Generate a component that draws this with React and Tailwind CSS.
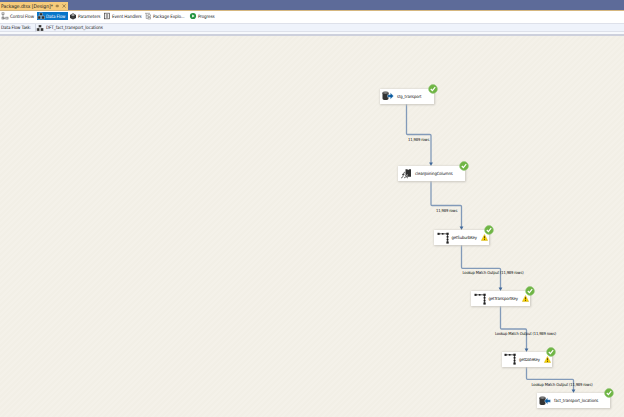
import React from "react";

const nodes = [
  { name: "stg_transport", icon: "source", box: "left-[379.5px] top-[88.5px] w-[54px]", text: "tracking-[-0.1px]" },
  { name: "cleanJoiningColumns", icon: "derived", box: "left-[397.5px] top-[166px] w-[67px]", text: "tracking-[-0.14px]" },
  { name: "getSuburbKey", icon: "lookup", warn: true, box: "left-[434px] top-[230px] w-[55px]", text: "tracking-[-0.16px]" },
  { name: "getTransportKey", icon: "lookup", warn: true, box: "left-[471px] top-[291px] w-[59px]", text: "tracking-[-0.13px]" },
  { name: "getDateKey", icon: "lookup", warn: true, box: "left-[501.5px] top-[351.5px] w-[50px]", text: "tracking-[-0.18px]" },
  { name: "fact_transport_locations", icon: "destination", box: "left-[536.5px] top-[393px] w-[73px]", text: "tracking-[-0.09px]" },
];

const edges = [
  { x: 406.5, y: 104, mid: 134.5, x2: 431, y2: 166 },
  { x: 431, y: 181, mid: 205.5, x2: 461.5, y2: 230 },
  { x: 461.5, y: 245, mid: 268.3, x2: 500.5, y2: 291 },
  { x: 500.5, y: 306, mid: 329, x2: 526.5, y2: 352 },
  { x: 526.5, y: 367, mid: 379.3, x2: 573.5, y2: 393 },
];

const labels = [
  { text: "11,989 rows", pos: "left-[408px] top-[136px] tracking-[-0.13px]" },
  { text: "11,989 rows", pos: "left-[436px] top-[207px] tracking-[-0.13px]" },
  { text: "Lookup Match Output (11,989 rows)", pos: "left-[462.5px] top-[269px] tracking-[-0.16px]" },
  { text: "Lookup Match Output (11,989 rows)", pos: "left-[495px] top-[330px] tracking-[-0.16px]" },
  { text: "Lookup Match Output (11,989 rows)", pos: "left-[531.5px] top-[380.5px] tracking-[-0.16px]" },
];

function NodeIcon({ type }) {
  return (
    <svg className="h-[12px] w-[14px] shrink-0" viewBox="0 0 14 12">
      {(type === "source" || type === "destination") && (
        <>
          <path d="M.5 3v5.5c0 2 6 2 6 0V3z" fill="#333333" />
          <ellipse cx="3.5" cy="3" rx="3" ry="1.1" fill="#999999" stroke="#333333" strokeWidth=".8" />
          <path
            d={type === "source" ? "M5.5 4.8h2.8V2.7L11.6 6 8.3 9.3V7.2H5.5z" : "M11.5 4.8H8.7V2.7L5.4 6l3.3 3.3V7.2h2.8z"}
            fill="#08599f" stroke="#ffffff" strokeWidth=".35"
          />
        </>
      )}
      {type === "derived" && (
        <>
          <path d="M5.5 1.2h2.2v.8h1V1.2H11v7.6H5.5z" fill="#303030" />
          <path d="M5 4.2c-1.8-.7-1.5 6.5-3.8 5.6M2 6.4h2.4M4.8 6.9c1.8 0 1.4 3.3 3 3M7.8 6.9C6.6 6.7 6 10 4.2 9.8" fill="none" stroke="#ffffff" strokeWidth="1.2" />
          <path d="M5 4.2c-1.8-.7-1.5 6.5-3.8 5.6M2 6.4h2.4M4.8 6.9c1.8 0 1.4 3.3 3 3M7.8 6.9C6.6 6.7 6 10 4.2 9.8" fill="none" stroke="#333333" strokeWidth=".8" />
        </>
      )}
      {type === "lookup" && (
        <>
          <path d="M1.5 1.8h9v9" fill="none" stroke="#333333" strokeWidth=".8" />
          <g fill="#222222">
            <rect x=".5" y=".8" width="2.1" height="2.1" />
            <rect x="4.9" y="1" width="1.6" height="1.6" />
            <rect x="9.4" y=".7" width="2.3" height="2.2" />
            <rect x="9.6" y="3.9" width="1.9" height="1.7" />
            <rect x="9.6" y="6.7" width="1.9" height="1.7" />
            <rect x="9.4" y="9.4" width="2.3" height="2.2" />
          </g>
        </>
      )}
    </svg>
  );
}

function Node({ node }) {
  return (
    <div className={`absolute flex h-[15px] items-center bg-white pl-[2.5px] shadow-[0_0.5px_2px_0.5px_#cbc8c0] ${node.box}`}>
      <NodeIcon type={node.icon} />
      <span className={`ml-[1px] text-[4.3px] text-[#111111] ${node.text}`}>{node.name}</span>
      {node.warn && (
        <svg className="absolute right-[1px] top-[4px] h-[7px] w-[7px]" viewBox="0 0 7 7">
          <path d="M3.5.4 6.7 6.5H.3z" fill="#f8d000" stroke="#c9ab12" strokeWidth=".4" strokeLinejoin="round" />
          <path d="M3.5 2.2v2.2M3.5 5v.9" stroke="#332b00" strokeWidth=".8" />
        </svg>
      )}
      <svg className="absolute -right-[4.5px] -top-[5px] h-[10px] w-[10px]" viewBox="0 0 10 10">
        <circle cx="5" cy="5" r="4.4" fill="#6fb544" stroke="#94c77a" strokeWidth=".6" />
        <path d="m2.8 5 1.6 1.7L7.2 3.2" fill="none" stroke="#ffffff" strokeWidth="1.2" />
      </svg>
    </div>
  );
}

function ToolIcon({ type }) {
  return (
    <svg className="h-[8px] w-[8px] shrink-0" viewBox="0 0 8 8">
      {type === "control" && (
        <g fill="none" stroke="#777777" strokeWidth=".7">
          <rect x="1" y=".8" width="2" height="1.6" /><path d="M2 2.4v4h2" />
          <rect x="1" y="5.2" width="2" height="1.8" /><rect x="4.8" y="5.2" width="2.2" height="1.8" />
        </g>
      )}
      {type === "data" && (
        <g fill="#292929" stroke="#e2e2e2" strokeWidth=".4">
          <path d="M2.6.9h2.8v2.7H2.6zM.8 4h2.8v3.1H.8zM4.6 4h2.8v3.1H4.6z" />
        </g>
      )}
      {type === "parameters" && (
        <>
          <path d="M1 3 4 1.3 7 3v3L4 7.5 1 6z" fill="#333333" />
          <path d="m1.8 3.1 2.2-1 2.2 1L4 4.1z" fill="#bcbcbc" /><path d="M4 4.3v2.5" stroke="#888888" strokeWidth=".4" />
        </>
      )}
      {type === "events" && (
        <g fill="none" stroke="#444444" strokeWidth=".7"><rect x="1.4" y="1.2" width="5.2" height="5.6" /><path d="M2.8 2.8h2.4M2.8 4h2.4M2.8 5.2h2.4" /></g>
      )}
      {type === "explorer" && (
        <g fill="none" stroke="#777777" strokeWidth=".6"><path d="M1 1.3h5M2.2 1.5v5h1.5M2.2 3.8h1.5" /><rect x="4" y="2.8" width="2.5" height="1.5" /><rect x="4" y="5.5" width="2.5" height="1.5" /></g>
      )}
      {type === "progress" && <><circle cx="4" cy="4" r="3.1" fill="#259542" /><path d="m3.2 2.5 2.4 1.5-2.4 1.5z" fill="#ffffff" /></>}
    </svg>
  );
}

function Tab({ type, children, className }) {
  return (
    <div className={`flex h-[8px] shrink-0 items-center whitespace-nowrap ${className}`}>
      <ToolIcon type={type} /><span className="ml-px">{children}</span>
    </div>
  );
}

export default function App() {
  return (
    <main className="flex h-[417px] w-[624px] flex-col overflow-hidden bg-[#f3f0e7] font-['DejaVu_Sans_Condensed','DejaVu_Sans',sans-serif] text-[4.6px] leading-[7px] tracking-[-0.14px] text-[#222222]">
      <header className="flex h-[11px] shrink-0 items-end border-b border-[#d6b77f] bg-[#5d6b99]">
        <div className="flex h-[8px] w-[68px] items-center bg-[#f6cb7b] pl-px text-[5px] tracking-[-0.02px]">
          <span className="w-[54px] whitespace-nowrap">Package.dtsx [Design]*</span>
          <svg className="h-[6px] w-[12px]" viewBox="0 0 12 6"><path d="M.5 3h1.2M1.8 1.8v2.4M1.8 2.3h1.5v1.4H1.8M7.6 1.4l3 3.2M10.6 1.4l-3 3.2" fill="none" stroke="#806638" strokeWidth=".7" /></svg>
        </div>
      </header>
      <nav className="flex h-[12px] shrink-0 items-start bg-white pl-px pt-px">
        <Tab type="control" className="w-[36px]">Control Flow</Tab>
        <Tab type="data" className="w-[31px] bg-[#0875c9] text-white">Data Flow</Tab>
        <Tab type="parameters" className="ml-px w-[34px]">Parameters</Tab>
        <Tab type="events" className="w-[41px]">Event Handlers</Tab>
        <Tab type="explorer" className="w-[45px]">Package Explo...</Tab>
        <Tab type="progress" className="w-[30px]">Progress</Tab>
      </nav>
      <section className="flex h-[9px] shrink-0 items-center border-y border-[#dee1ea] bg-[#eff3fb] pl-px">
        <span className="w-[34px] whitespace-nowrap">Data Flow Task:</span>
        <div className="flex h-[8px] grow items-center border-l border-[#d0d5e1]">
          <ToolIcon type="data" />
          <span className="ml-[2px] tracking-[-0.1px]">DFT_fact_transport_locations</span>
        </div>
      </section>
      <div className="h-[4px] shrink-0 border-b-2 border-[#cdd0dc] bg-[#f7f9fc]" />
      <section className="min-h-0 grow bg-[repeating-linear-gradient(135deg,#f4f1e9_0px,#f4f1e9_2px,#f2efe6_2px,#f2efe6_4px)]">
        <svg className="absolute left-0 top-0 h-[417px] w-[624px]" viewBox="0 0 624 417">
          {edges.map((e) => (
            <g key={e.x}>
              <path d={`M${e.x} ${e.y}V${e.mid - 1}q0 1 1 1H${e.x2 - 1}q1 0 1 1V${e.y2 - 2}`} fill="none" stroke="#829ab9" strokeWidth="1.3" />
              <path d={`M${e.x2 - 1.9} ${e.y2 - 3.4}h3.8L${e.x2} ${e.y2}z`} fill="#406899" />
            </g>
          ))}
        </svg>
        {labels.map((l) => (
          <div key={l.pos} className={`absolute whitespace-nowrap text-[4.1px] text-[#111111] ${l.pos}`}>{l.text}</div>
        ))}
        {nodes.map((node) => <Node key={node.name} node={node} />)}
      </section>
    </main>
  );
}
